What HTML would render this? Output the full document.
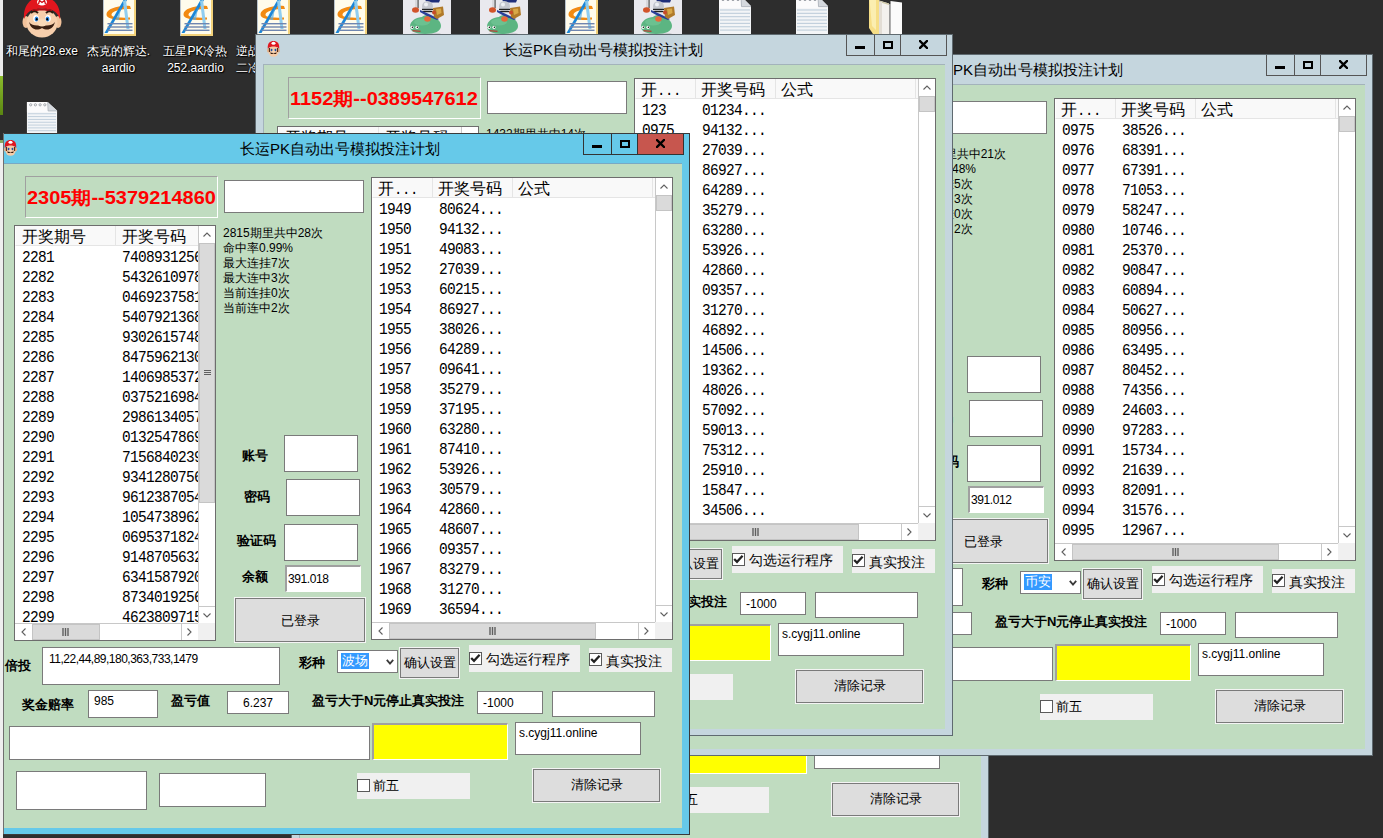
<!DOCTYPE html>
<html><head><meta charset="utf-8"><style>
html,body{margin:0;padding:0}
body{width:1383px;height:838px;overflow:hidden;position:relative;background:#2d2d2d;font-family:"Liberation Sans",sans-serif;}
div{position:absolute;box-sizing:border-box}
.win{border:1px solid #444;overflow:hidden}
.title{height:29px;line-height:30px;text-align:center;font-size:15px;color:#000;white-space:nowrap}
.mario{width:13px;height:16px;border-radius:6px 6px 5px 5px;background:radial-gradient(circle at 50% 78%,#f5c9a0 0 40%,transparent 41%),linear-gradient(#e3202a 0 45%,#6b3a20 45% 100%)}
.tb{border:1px solid #333;background:transparent}
.minbar{left:8px;top:11px;width:10px;height:3px;background:#000}
.maxbox{left:8px;top:6px;width:10px;height:8px;border:2px solid #000}
.xx{left:0;top:-1px;width:45px;text-align:center;font-weight:bold;font-size:15px;line-height:20px;font-family:"Liberation Sans",sans-serif}
.client{background:#c0dcc0;overflow:hidden}
.cedge{left:0;top:0;width:100%;height:100%;border-top:1px solid #5aa7c2;border-left:1px solid #5aa7c2}
.client>div{}
.sunk{border-top:1px solid #a0a0a0;border-left:1px solid #a0a0a0;border-bottom:1px solid #fff;border-right:1px solid #fff}
.sunkw{background:#fff;border-top:2px solid #a0a0a0;border-left:2px solid #a0a0a0;border-bottom:1px solid #fff;border-right:1px solid #fff}
.sunky{background:#ff0;border-top:2px solid #a0a0a0;border-left:2px solid #a0a0a0;border-bottom:1px solid #fff;border-right:1px solid #fff}
.red{left:1px;top:1px;height:40px;line-height:40px;color:#f00;font-weight:bold;font-size:18px;white-space:nowrap;letter-spacing:0px;transform:scaleX(1.11);transform-origin:0 50%}
.tbx{background:#fff;border:1px solid #7a7a7a}
.t{white-space:nowrap;color:#000}
.st{font-size:12px;line-height:15px}
.lb{font-size:13px;line-height:18px;font-weight:bold;margin-top:1px}
.sm{font-size:12px;line-height:14px}
.btn{background:#dddddd;border:1px solid #7a7a7a;box-shadow:0 0 0 1px #f4f4f4}
.bt{left:0;top:0;width:100%;height:100%;display:flex;align-items:center;justify-content:center;font-size:13px;padding-bottom:1px}
.lv{background:#fff;border:1px solid #6d6d6d;overflow:hidden}
.lvh{left:0;top:0;height:20px;background:#f9f9f9;border-bottom:1px solid #e5e5e5;border-left:1px solid #fff}
.hd{top:1px;font-size:16px;line-height:19px;white-space:nowrap}
.hdiv{top:0;width:1px;height:19px;background:#e5e5e5}
.rw{font-family:"Liberation Mono",monospace;font-size:14.5px;letter-spacing:-0.7px;line-height:20px;margin-top:2px;white-space:nowrap;transform:scaleY(1.08);transform-origin:50% 60%}
.dots{font-family:"Liberation Mono",monospace;font-size:14px;letter-spacing:-0.4px}
.vsb{background:#fff;border-left:1px solid #c8c8c8}
.hsb{background:#fff;border-top:1px solid #c8c8c8}
.sbtn{background:#fff}
.thumb{background:#dadada;border:1px solid #c4c4c4}
.corner{background:#f0f0f0}
.chev{width:7px;height:7px;border-left:1.5px solid #606060;border-top:1.5px solid #606060}
.chev.up{left:5px;top:6px;transform:rotate(45deg)}
.chev.dn{left:5px;top:3px;transform:rotate(225deg)}
.chev.lf{left:6px;top:5px;transform:rotate(-45deg)}
.chev.rt{left:3px;top:5px;transform:rotate(135deg)}
.grip{position:absolute;left:4px;top:50%;margin-top:-4px}
.hgrip{position:absolute;left:50%;top:3px;margin-left:-4px}
.cbbg{background:#f0f0f0}
.cb{width:13px;height:13px;border:1px solid #5a5a5a;background:#fff}
.cbl{font-size:14px;line-height:20px}
.sel{left:3px;top:2px;height:16px;padding:0 1px;background:#3399ff;color:#fff;font-size:13px;line-height:16px;white-space:nowrap}
.dtext{font-size:12px;line-height:17px;color:#fff;text-align:center;text-shadow:0 0 2px #000,1px 1px 1px #000;white-space:nowrap}

</style></head><body>
<svg width="0" height="0" style="position:absolute">
<defs>
<symbol id="aardio" viewBox="0 0 33 36">
<rect x="0" y="0" width="33" height="36" fill="#f3d27a"/>
<rect x="0.5" y="0" width="30.5" height="34" fill="#fffcec"/>
<rect x="0" y="0" width="1" height="36" fill="#b9c3cc"/>
<path d="M27 6 C15 5 4 9 3.5 14 C3 18 10 20 22 20 L27 19.5 L27 17.5 C14 18 8 17 8.5 14.5 C9 11 17 9 28 9 Z" fill="#f28a12"/>
<path d="M1.5 33 L20.5 0 L24 0 L4.5 33 Z" fill="#1b86d8"/>
<path d="M20 1 L23.5 29 L26.5 29 L23 0 Z" fill="#8fcdf0"/>
<path d="M18 7 L13 20 L16 20 Z" fill="#58aee6" opacity="0.7"/>
<rect x="4.5" y="23" width="25" height="1.4" fill="#6f86b0"/>
<rect x="4.5" y="26.3" width="25" height="1.4" fill="#6f86b0"/>
<rect x="4.5" y="29.6" width="25" height="1.4" fill="#6f86b0"/>
</symbol>
<symbol id="txtdoc" viewBox="0 0 32 34">
<path d="M0 0 H22 L32 9 V34 H0 Z" fill="#f3f5f7"/>
<path d="M0 0 H22 V10 H32 V11 H0 Z" fill="#fbfbfc"/>
<path d="M22 0 L32 9.5 H22.5 Z" fill="#d5d9de"/>
<path d="M22 0 L22.5 9.5 L32 9.5" stroke="#aab0b8" stroke-width="0.8" fill="none"/>
<g fill="none" stroke="#8b9097" stroke-width="0.8"><circle cx="4" cy="3" r="1.2"/><circle cx="9" cy="3" r="1.2"/><circle cx="14" cy="3" r="1.2"/><circle cx="19" cy="3" r="1.2"/></g>
<g fill="#bfcedb"><rect x="1" y="12" width="30" height="1"/><rect x="1" y="15" width="30" height="1"/><rect x="1" y="18" width="30" height="1"/><rect x="1" y="21" width="30" height="1"/><rect x="1" y="24" width="30" height="1"/><rect x="1" y="27" width="30" height="1"/><rect x="1" y="30" width="30" height="1"/></g>
</symbol>
<symbol id="slime" viewBox="0 0 48 34">
<rect width="48" height="34" fill="#e9e9ee"/>
<ellipse cx="23" cy="33.5" rx="15" ry="1.2" fill="#cfcfd4"/>
<path d="M7 27 C7 20 14 17.5 19 17 C21 14.5 26 14.5 28 17 C34 18 38 21 38 26 C38 31 32 34 22 34 C12 34 7 31 7 27 Z" fill="#5cb582"/>
<ellipse cx="19" cy="22" rx="8" ry="3.5" fill="#6fc493" opacity="0.8"/>
<circle cx="9" cy="27.3" r="1.6" fill="#fff"/><circle cx="14" cy="27.3" r="1.6" fill="#fff"/>
<circle cx="9.4" cy="27.3" r="0.8" fill="#111"/><circle cx="14.4" cy="27.3" r="0.8" fill="#111"/>
<path d="M9.5 30.8 L17.5 31.3" stroke="#c22" stroke-width="1.1"/>
<path d="M22 0 L37 0 L36 2.5 L25 2.5 Z" fill="#1f2f7a"/>
<rect x="12" y="0" width="3" height="8" fill="#d8d8dc"/><rect x="14.5" y="0" width="1.2" height="8" fill="#555"/>
<circle cx="24.5" cy="6.5" r="5.5" fill="#c4c7cf"/>
<circle cx="23" cy="4.5" r="2" fill="#eef0f4"/>
<rect x="19" y="8.8" width="11" height="1.3" fill="#222"/><rect x="19.5" y="11" width="10" height="1.2" fill="#222"/>
<path d="M17 10 L26 14 L36 19 L34 20 L24 16 L17 12 Z" fill="#2a3f9a"/>
<path d="M30 8 L40 6.5 L41 15 L34 19 L31 17 Z" fill="#b07a2a"/>
<path d="M33 9 L38 8.5 L38.5 13 L34 15 Z" fill="#d8a848"/>
<ellipse cx="12.5" cy="10" rx="3.5" ry="2.8" fill="#d2542a"/>
<ellipse cx="24.5" cy="19" rx="3.3" ry="2.8" fill="#e7683a"/>
<ellipse cx="31" cy="12.5" rx="2" ry="2" fill="#c84a2a"/>
</symbol>
<symbol id="folder" viewBox="0 0 34 34">
<path d="M0 0 H10 V34 H4 L0 28 Z" fill="#f6de86"/>
<path d="M0.5 0 H7 V30 L3 26 Z" fill="#fbeeb0"/>
<path d="M10 0.5 L20 3.5 L20 34 L10 34 Z" fill="#f3f1ee"/>
<path d="M10 0.5 L20 3.5 L20 5 L10 2 Z" fill="#cfc9a8"/>
<rect x="10" y="2" width="3" height="32" fill="#e2ddd5"/>
<rect x="20" y="4" width="1.5" height="30" fill="#9a9a9a"/>
<path d="M21.5 1 L33 2.5 L33 34 L21.5 34 Z" fill="#fbfbfb"/>
</symbol>
<symbol id="mario" viewBox="0 0 40 38">
<ellipse cx="4" cy="22" rx="3.5" ry="6" fill="#f2c29b"/>
<ellipse cx="36" cy="22" rx="3.5" ry="6" fill="#f2c29b"/>
<ellipse cx="20" cy="23" rx="15.5" ry="14.5" fill="#f7cfac"/>
<path d="M2 19 C1 6 8 -3 20 -3 C32 -3 39 6 38 19 C36 14 33 11 30 10 C24 8 16 8 10 10 C7 11 4 14 2 19 Z" fill="#e1161e"/>
<path d="M10 10 C16 8 24 8 30 10 L30 12 C24 10 16 10 10 12 Z" fill="#b01017"/>
<ellipse cx="20" cy="2" rx="5" ry="3.5" fill="#fff"/>
<path d="M16.5 4 L17.5 0.5 L20 2.5 L22.5 0.5 L23.5 4" stroke="#d01018" stroke-width="1.3" fill="none"/>
<path d="M9 13 C11 11 14 11 16 13" stroke="#2a1a10" stroke-width="2" fill="none"/>
<path d="M24 13 C26 11 29 11 31 13" stroke="#2a1a10" stroke-width="2" fill="none"/>
<ellipse cx="14" cy="18.5" rx="2.8" ry="3.5" fill="#fff"/><ellipse cx="26" cy="18.5" rx="2.8" ry="3.5" fill="#fff"/>
<ellipse cx="14.5" cy="19" rx="1.9" ry="2.6" fill="#2a86e0"/><ellipse cx="25.5" cy="19" rx="1.9" ry="2.6" fill="#2a86e0"/>
<ellipse cx="14.8" cy="19.3" rx="0.9" ry="1.3" fill="#000"/><ellipse cx="25.2" cy="19.3" rx="0.9" ry="1.3" fill="#000"/>
<path d="M7 22 C9 30 15 31 20 28 C25 31 31 30 33 22 C30 26 25 26 20 25 C15 26 10 26 7 22 Z" fill="#3a1f12"/>
<ellipse cx="20" cy="22.5" rx="5" ry="4" fill="#f9d8b8"/>
</symbol>
<symbol id="mario16" viewBox="0 0 13 16">
<ellipse cx="1.3" cy="9.5" rx="1.3" ry="2" fill="#e8b48c"/>
<ellipse cx="11.7" cy="9.5" rx="1.3" ry="2" fill="#e8b48c"/>
<ellipse cx="6.5" cy="10.3" rx="5.2" ry="5.5" fill="#f6cba6"/>
<path d="M0.8 7.8 C0.3 2 3 0 6.5 0 C10 0 12.7 2 12.2 7.8 C10.5 6 8.5 5.6 6.5 5.6 C4.5 5.6 2.5 6 0.8 7.8 Z" fill="#e0171f"/>
<ellipse cx="6.5" cy="2.3" rx="2" ry="1.5" fill="#fff"/>
<rect x="1.8" y="7" width="1.3" height="4" fill="#5a2e16"/><rect x="9.9" y="7" width="1.3" height="4" fill="#5a2e16"/>
<ellipse cx="4.6" cy="9" rx="0.9" ry="1.2" fill="#1c4fa8"/><ellipse cx="8.4" cy="9" rx="0.9" ry="1.2" fill="#1c4fa8"/>
<path d="M2.8 11.2 C4 13.8 5.8 13 6.5 12.3 C7.2 13 9 13.8 10.2 11.2 C9 12 7.5 11.8 6.5 11.2 C5.5 11.8 4 12 2.8 11.2 Z" fill="#2e180c"/>
<ellipse cx="6.5" cy="10.8" rx="1.6" ry="1.2" fill="#f9d6b6"/>
</symbol>
</defs></svg>
<svg style="position:absolute;left:22px;top:0" width="40" height="38"><use href="#mario"/></svg>
<svg style="position:absolute;left:103px;top:0" width="33" height="36"><use href="#aardio"/></svg>
<svg style="position:absolute;left:180px;top:0" width="33" height="36"><use href="#aardio"/></svg>
<svg style="position:absolute;left:257px;top:0" width="33" height="36"><use href="#aardio"/></svg>
<svg style="position:absolute;left:334px;top:0" width="33" height="36"><use href="#aardio"/></svg>
<svg style="position:absolute;left:565px;top:0" width="33" height="36"><use href="#aardio"/></svg>
<svg style="position:absolute;left:403px;top:0" width="48" height="34"><use href="#slime"/></svg>
<svg style="position:absolute;left:480px;top:0" width="48" height="34"><use href="#slime"/></svg>
<svg style="position:absolute;left:634px;top:0" width="48" height="34"><use href="#slime"/></svg>
<svg style="position:absolute;left:719px;top:-4px" width="32" height="38" viewBox="0 0 32 34" preserveAspectRatio="none"><use href="#txtdoc"/></svg>
<svg style="position:absolute;left:796px;top:-4px" width="32" height="38" viewBox="0 0 32 34" preserveAspectRatio="none"><use href="#txtdoc"/></svg>
<svg style="position:absolute;left:869px;top:0" width="34" height="34"><use href="#folder"/></svg>
<svg style="position:absolute;left:26px;top:102px" width="32" height="32"><use href="#txtdoc"/></svg>
<div class="dtext" style="left:-1px;top:43px;width:86px">和尾的28.exe</div>
<div class="dtext" style="left:80px;top:43px;width:77px">杰克的辉达.<br>aardio</div>
<div class="dtext" style="left:157px;top:43px;width:77px">五星PK冷热<br>252.aardio</div>
<div class="dtext" style="left:236px;top:43px;width:77px;text-align:left">逆战<br>二冷</div>

<div class="win" style="left:291px;top:147px;width:698px;height:702px;background:#c5d6de;border-color:#5f6a70"><svg style="position:absolute;left:11px;top:6px" width="13" height="16"><use href="#mario16"/></svg><div class="title" style="left:47px;top:0;width:600px">长运PK自动出号模拟投注计划</div><div class="tb" style="left:590px;top:-1px;width:29px;height:22px;border-color:#555"><div class="minbar"></div></div><div class="tb" style="left:618px;top:-1px;width:27px;height:22px;border-color:#555"><div class="maxbox"></div></div><div class="tb" style="left:644px;top:-1px;width:47px;height:22px;border-color:#555;background:#c5d6de"><svg style="position:absolute;left:18px;top:5px" width="9" height="9" viewBox="0 0 9 9"><path d="M1 1 L8 8 M8 1 L1 8" stroke="#000" stroke-width="2.4" stroke-linecap="square"/></svg></div><div class="client" style="left:7px;top:29px;width:682px;height:665px;"><div class="cedge" style="border-color:#a3b3bb"></div><div class="sunk" style="left:25px;top:13px;width:193px;height:42px;"><div class="red">1152期--0389547612</div></div><div class="tbx" style="left:224px;top:17px;width:140px;height:33px;"></div><div class="lv" style="left:14px;top:62px;width:202px;height:416px"><div class="lvh" style="width:183px"></div><div class="hd" style="left:7px">开奖期号</div><div class="hdiv" style="left:100px"></div><div class="hd" style="left:107px">开奖号码</div><div class="rw" style="left:7px;top:20px">1130</div><div class="rw" style="left:107px;top:20px">0389547612</div><div class="rw" style="left:7px;top:40px">1131</div><div class="rw" style="left:107px;top:40px">0389547612</div><div class="rw" style="left:7px;top:60px">1132</div><div class="rw" style="left:107px;top:60px">0389547612</div><div class="rw" style="left:7px;top:80px">1133</div><div class="rw" style="left:107px;top:80px">0389547612</div><div class="rw" style="left:7px;top:100px">1134</div><div class="rw" style="left:107px;top:100px">0389547612</div><div class="rw" style="left:7px;top:120px">1135</div><div class="rw" style="left:107px;top:120px">0389547612</div><div class="rw" style="left:7px;top:140px">1136</div><div class="rw" style="left:107px;top:140px">0389547612</div><div class="rw" style="left:7px;top:160px">1137</div><div class="rw" style="left:107px;top:160px">0389547612</div><div class="rw" style="left:7px;top:180px">1138</div><div class="rw" style="left:107px;top:180px">0389547612</div><div class="rw" style="left:7px;top:200px">1139</div><div class="rw" style="left:107px;top:200px">0389547612</div><div class="rw" style="left:7px;top:220px">1140</div><div class="rw" style="left:107px;top:220px">0389547612</div><div class="rw" style="left:7px;top:240px">1141</div><div class="rw" style="left:107px;top:240px">0389547612</div><div class="rw" style="left:7px;top:260px">1142</div><div class="rw" style="left:107px;top:260px">0389547612</div><div class="rw" style="left:7px;top:280px">1143</div><div class="rw" style="left:107px;top:280px">0389547612</div><div class="rw" style="left:7px;top:300px">1144</div><div class="rw" style="left:107px;top:300px">0389547612</div><div class="rw" style="left:7px;top:320px">1145</div><div class="rw" style="left:107px;top:320px">0389547612</div><div class="rw" style="left:7px;top:340px">1146</div><div class="rw" style="left:107px;top:340px">0389547612</div><div class="rw" style="left:7px;top:360px">1147</div><div class="rw" style="left:107px;top:360px">0389547612</div><div class="rw" style="left:7px;top:380px">1148</div><div class="rw" style="left:107px;top:380px">0389547612</div><div class="vsb" style="left:183px;top:0;width:17px;height:397px"><div class="sbtn" style="left:0;top:0;width:16px;height:17px"><svg style="position:absolute;left:4px;top:6px" width="8" height="5" viewBox="0 0 8 5"><path d="M0.5 4.5 L4 1 L7.5 4.5" stroke="#606060" stroke-width="1.1" fill="none"/></svg></div><div class="thumb" style="left:0;top:17px;width:16px;height:260px"><svg class="grip" width="7" height="7" viewBox="0 0 7 7"><path d="M0 1.5H7M0 3.5H7M0 5.5H7" stroke="#606060" stroke-width="1"/></svg></div><div class="sbtn" style="left:0;top:380px;width:16px;height:17px;border-top:1px solid #c8c8c8"><svg style="position:absolute;left:4px;top:6px" width="8" height="5" viewBox="0 0 8 5"><path d="M0.5 0.5 L4 4 L7.5 0.5" stroke="#606060" stroke-width="1.1" fill="none"/></svg></div></div><div class="hsb" style="left:0;top:397px;width:183px;height:17px"><div class="sbtn" style="left:0;top:0;width:17px;height:16px"><svg style="position:absolute;left:6px;top:4px" width="5" height="8" viewBox="0 0 5 8"><path d="M4.5 0.5 L1 4 L4.5 7.5" stroke="#606060" stroke-width="1.1" fill="none"/></svg></div><div class="thumb" style="left:17px;top:0;width:68px;height:16px"><svg class="hgrip" width="7" height="8" viewBox="0 0 7 8"><path d="M1 0V8M3.5 0V8M6 0V8" stroke="#606060" stroke-width="1.4"/></svg></div><div class="sbtn" style="left:166px;top:0;width:17px;height:16px;border-left:1px solid #c8c8c8"><svg style="position:absolute;left:5px;top:4px" width="5" height="8" viewBox="0 0 5 8"><path d="M0.5 0.5 L4 4 L0.5 7.5" stroke="#606060" stroke-width="1.1" fill="none"/></svg></div></div><div class="corner" style="left:183px;top:397px;width:17px;height:17px"></div></div><div class="t st" style="left:223px;top:63px;">1432期里共中14次</div><div class="t st" style="left:223px;top:78px;">命中率0.98%</div><div class="t st" style="left:223px;top:93px;">最大连挂7次</div><div class="t st" style="left:223px;top:108px;">最大连中3次</div><div class="t st" style="left:223px;top:123px;">当前连挂0次</div><div class="t st" style="left:223px;top:138px;">当前连中2次</div><div class="lv" style="left:371px;top:14px;width:302px;height:463px"><div class="lvh" style="width:283px"></div><div class="hd" style="left:6px">开<span class=dots>...</span></div><div class="hdiv" style="left:60px"></div><div class="hd" style="left:66px">开奖号码</div><div class="hdiv" style="left:140px"></div><div class="hd" style="left:146px">公式</div><div class="hdiv" style="left:280px"></div><div class="rw" style="left:7px;top:20px">123</div><div class="rw" style="left:67px;top:20px">01234...</div><div class="rw" style="left:7px;top:40px">0975</div><div class="rw" style="left:67px;top:40px">94132...</div><div class="rw" style="left:7px;top:60px">0976</div><div class="rw" style="left:67px;top:60px">27039...</div><div class="rw" style="left:7px;top:80px">0977</div><div class="rw" style="left:67px;top:80px">86927...</div><div class="rw" style="left:7px;top:100px">0978</div><div class="rw" style="left:67px;top:100px">64289...</div><div class="rw" style="left:7px;top:120px">0979</div><div class="rw" style="left:67px;top:120px">35279...</div><div class="rw" style="left:7px;top:140px">0980</div><div class="rw" style="left:67px;top:140px">63280...</div><div class="rw" style="left:7px;top:160px">0981</div><div class="rw" style="left:67px;top:160px">53926...</div><div class="rw" style="left:7px;top:180px">0982</div><div class="rw" style="left:67px;top:180px">42860...</div><div class="rw" style="left:7px;top:200px">0983</div><div class="rw" style="left:67px;top:200px">09357...</div><div class="rw" style="left:7px;top:220px">0984</div><div class="rw" style="left:67px;top:220px">31270...</div><div class="rw" style="left:7px;top:240px">0985</div><div class="rw" style="left:67px;top:240px">46892...</div><div class="rw" style="left:7px;top:260px">0986</div><div class="rw" style="left:67px;top:260px">14506...</div><div class="rw" style="left:7px;top:280px">0987</div><div class="rw" style="left:67px;top:280px">19362...</div><div class="rw" style="left:7px;top:300px">0988</div><div class="rw" style="left:67px;top:300px">48026...</div><div class="rw" style="left:7px;top:320px">0989</div><div class="rw" style="left:67px;top:320px">57092...</div><div class="rw" style="left:7px;top:340px">0990</div><div class="rw" style="left:67px;top:340px">59013...</div><div class="rw" style="left:7px;top:360px">0991</div><div class="rw" style="left:67px;top:360px">75312...</div><div class="rw" style="left:7px;top:380px">0992</div><div class="rw" style="left:67px;top:380px">25910...</div><div class="rw" style="left:7px;top:400px">0993</div><div class="rw" style="left:67px;top:400px">15847...</div><div class="rw" style="left:7px;top:420px">0994</div><div class="rw" style="left:67px;top:420px">34506...</div><div class="vsb" style="left:283px;top:0;width:17px;height:444px"><div class="sbtn" style="left:0;top:0;width:16px;height:17px"><svg style="position:absolute;left:4px;top:6px" width="8" height="5" viewBox="0 0 8 5"><path d="M0.5 4.5 L4 1 L7.5 4.5" stroke="#606060" stroke-width="1.1" fill="none"/></svg></div><div class="thumb" style="left:0;top:17px;width:16px;height:16px"></div><div class="sbtn" style="left:0;top:427px;width:16px;height:17px;border-top:1px solid #c8c8c8"><svg style="position:absolute;left:4px;top:6px" width="8" height="5" viewBox="0 0 8 5"><path d="M0.5 0.5 L4 4 L7.5 0.5" stroke="#606060" stroke-width="1.1" fill="none"/></svg></div></div><div class="hsb" style="left:0;top:444px;width:283px;height:17px"><div class="sbtn" style="left:0;top:0;width:17px;height:16px"><svg style="position:absolute;left:6px;top:4px" width="5" height="8" viewBox="0 0 5 8"><path d="M4.5 0.5 L1 4 L4.5 7.5" stroke="#606060" stroke-width="1.1" fill="none"/></svg></div><div class="thumb" style="left:17px;top:0;width:207px;height:16px"><svg class="hgrip" width="7" height="8" viewBox="0 0 7 8"><path d="M1 0V8M3.5 0V8M6 0V8" stroke="#606060" stroke-width="1.4"/></svg></div><div class="sbtn" style="left:266px;top:0;width:17px;height:16px;border-left:1px solid #c8c8c8"><svg style="position:absolute;left:5px;top:4px" width="5" height="8" viewBox="0 0 5 8"><path d="M0.5 0.5 L4 4 L0.5 7.5" stroke="#606060" stroke-width="1.1" fill="none"/></svg></div></div><div class="corner" style="left:283px;top:444px;width:17px;height:17px"></div></div><div class="t lb" style="left:242px;top:283px;">账号</div><div class="tbx" style="left:284px;top:272px;width:74px;height:37px;"></div><div class="t lb" style="left:244px;top:324px;">密码</div><div class="tbx" style="left:286px;top:316px;width:74px;height:37px;"></div><div class="t lb" style="left:237px;top:368px;">验证码</div><div class="tbx" style="left:284px;top:361px;width:74px;height:37px;"></div><div class="t lb" style="left:242px;top:404px;">余额</div><div class="sunkw" style="left:285px;top:402px;width:76px;height:27px;"><div class="t sm" style="left:1px;top:5px;letter-spacing:-0.4px">391.018</div></div><div class="btn" style="left:235px;top:435px;width:130px;height:44px;"><div class="bt" style="padding:1px 0 0 0">已登录</div></div><div class="t lb" style="left:5px;top:493px;">倍投</div><div class="tbx" style="left:42px;top:484px;width:238px;height:38px;"><div class="t sm" style="left:6px;top:4px;letter-spacing:-0.5px">11,22,44,89,180,363,733,1479</div></div><div class="t lb" style="left:299px;top:490px;">彩种</div><div class="tbx" style="left:337px;top:487px;width:61px;height:23px;"><div class="sel">波场</div><svg style="position:absolute;left:48px;top:8px" width="8" height="6" viewBox="0 0 8 6"><path d="M0.8 0.8 L4 4.5 L7.2 0.8" stroke="#3a3a3a" stroke-width="1.8" fill="none"/></svg></div><div class="btn" style="left:400px;top:485px;width:59px;height:30px;"><div class="bt">确认设置</div></div><div class="cbbg" style="left:469px;top:482px;width:111px;height:27px"><div class="cb" style="left:0px;top:7px"><svg width="11" height="11" viewBox="0 0 11 11" style="position:absolute;left:0;top:0"><path d="M1.2 5 L4 7.8 L9.6 1.8" stroke="#222" stroke-width="2.3" fill="none"/></svg></div><div class="t cbl" style="left:17px;top:4px;font-size:14px">勾选运行程序</div></div><div class="cbbg" style="left:589px;top:485px;width:83px;height:24px"><div class="cb" style="left:0px;top:5px"><svg width="11" height="11" viewBox="0 0 11 11" style="position:absolute;left:0;top:0"><path d="M1.2 5 L4 7.8 L9.6 1.8" stroke="#222" stroke-width="2.3" fill="none"/></svg></div><div class="t cbl" style="left:17px;top:3px;font-size:14px">真实投注</div></div><div class="t lb" style="left:22px;top:532px;">奖金赔率</div><div class="tbx" style="left:88px;top:527px;width:70px;height:28px;"><div class="t sm" style="left:5px;top:3px">985</div></div><div class="t lb" style="left:171px;top:528px;">盈亏值</div><div class="tbx" style="left:227px;top:528px;width:62px;height:23px;"><div class="t sm" style="left:0;width:60px;text-align:center;top:4px">6.237</div></div><div class="t lb" style="left:312px;top:528px;">盈亏大于N元停止真实投注</div><div class="tbx" style="left:477px;top:528px;width:66px;height:23px;"><div class="t sm" style="left:5px;top:4px">-1000</div></div><div class="tbx" style="left:552px;top:528px;width:103px;height:26px;"></div><div class="tbx" style="left:9px;top:563px;width:361px;height:34px;"></div><div class="sunky" style="left:372px;top:560px;width:136px;height:37px;"></div><div class="tbx" style="left:515px;top:559px;width:126px;height:33px;"><div class="t sm" style="left:3px;top:3px">s.cygj11.online</div></div><div class="tbx" style="left:16px;top:608px;width:131px;height:39px;"></div><div class="tbx" style="left:159px;top:610px;width:107px;height:34px;"></div><div class="cbbg" style="left:357px;top:610px;width:113px;height:26px"><div class="cb" style="left:0px;top:6px"></div><div class="t cbl" style="left:16px;top:3px;font-size:13px">前五</div></div><div class="btn" style="left:533px;top:606px;width:127px;height:33px;"><div class="bt">清除记录</div></div></div></div>
<div class="win" style="left:675px;top:54px;width:698px;height:702px;background:#c5d6de;border-color:#5f6a70"><svg style="position:absolute;left:11px;top:6px" width="13" height="16"><use href="#mario16"/></svg><div class="title" style="left:47px;top:0;width:600px">长运PK自动出号模拟投注计划</div><div class="tb" style="left:590px;top:-1px;width:29px;height:22px;border-color:#555"><div class="minbar"></div></div><div class="tb" style="left:618px;top:-1px;width:27px;height:22px;border-color:#555"><div class="maxbox"></div></div><div class="tb" style="left:644px;top:-1px;width:47px;height:22px;border-color:#555;background:#c5d6de"><svg style="position:absolute;left:18px;top:5px" width="9" height="9" viewBox="0 0 9 9"><path d="M1 1 L8 8 M8 1 L1 8" stroke="#000" stroke-width="2.4" stroke-linecap="square"/></svg></div><div class="client" style="left:7px;top:29px;width:682px;height:665px;"><div class="cedge" style="border-color:#a3b3bb"></div><div class="sunk" style="left:25px;top:13px;width:193px;height:42px;"><div class="red">0995期--1296738540</div></div><div class="tbx" style="left:224px;top:17px;width:140px;height:33px;"></div><div class="lv" style="left:14px;top:62px;width:202px;height:416px"><div class="lvh" style="width:183px"></div><div class="hd" style="left:7px">开奖期号</div><div class="hdiv" style="left:100px"></div><div class="hd" style="left:107px">开奖号码</div><div class="rw" style="left:7px;top:20px">0975</div><div class="rw" style="left:107px;top:20px">3852619470</div><div class="rw" style="left:7px;top:40px">0976</div><div class="rw" style="left:107px;top:40px">3852619470</div><div class="rw" style="left:7px;top:60px">0977</div><div class="rw" style="left:107px;top:60px">3852619470</div><div class="rw" style="left:7px;top:80px">0978</div><div class="rw" style="left:107px;top:80px">3852619470</div><div class="rw" style="left:7px;top:100px">0979</div><div class="rw" style="left:107px;top:100px">3852619470</div><div class="rw" style="left:7px;top:120px">0980</div><div class="rw" style="left:107px;top:120px">3852619470</div><div class="rw" style="left:7px;top:140px">0981</div><div class="rw" style="left:107px;top:140px">3852619470</div><div class="rw" style="left:7px;top:160px">0982</div><div class="rw" style="left:107px;top:160px">3852619470</div><div class="rw" style="left:7px;top:180px">0983</div><div class="rw" style="left:107px;top:180px">3852619470</div><div class="rw" style="left:7px;top:200px">0984</div><div class="rw" style="left:107px;top:200px">3852619470</div><div class="rw" style="left:7px;top:220px">0985</div><div class="rw" style="left:107px;top:220px">3852619470</div><div class="rw" style="left:7px;top:240px">0986</div><div class="rw" style="left:107px;top:240px">3852619470</div><div class="rw" style="left:7px;top:260px">0987</div><div class="rw" style="left:107px;top:260px">3852619470</div><div class="rw" style="left:7px;top:280px">0988</div><div class="rw" style="left:107px;top:280px">3852619470</div><div class="rw" style="left:7px;top:300px">0989</div><div class="rw" style="left:107px;top:300px">3852619470</div><div class="rw" style="left:7px;top:320px">0990</div><div class="rw" style="left:107px;top:320px">3852619470</div><div class="rw" style="left:7px;top:340px">0991</div><div class="rw" style="left:107px;top:340px">3852619470</div><div class="rw" style="left:7px;top:360px">0992</div><div class="rw" style="left:107px;top:360px">3852619470</div><div class="rw" style="left:7px;top:380px">0993</div><div class="rw" style="left:107px;top:380px">3852619470</div><div class="vsb" style="left:183px;top:0;width:17px;height:397px"><div class="sbtn" style="left:0;top:0;width:16px;height:17px"><svg style="position:absolute;left:4px;top:6px" width="8" height="5" viewBox="0 0 8 5"><path d="M0.5 4.5 L4 1 L7.5 4.5" stroke="#606060" stroke-width="1.1" fill="none"/></svg></div><div class="thumb" style="left:0;top:17px;width:16px;height:260px"><svg class="grip" width="7" height="7" viewBox="0 0 7 7"><path d="M0 1.5H7M0 3.5H7M0 5.5H7" stroke="#606060" stroke-width="1"/></svg></div><div class="sbtn" style="left:0;top:380px;width:16px;height:17px;border-top:1px solid #c8c8c8"><svg style="position:absolute;left:4px;top:6px" width="8" height="5" viewBox="0 0 8 5"><path d="M0.5 0.5 L4 4 L7.5 0.5" stroke="#606060" stroke-width="1.1" fill="none"/></svg></div></div><div class="hsb" style="left:0;top:397px;width:183px;height:17px"><div class="sbtn" style="left:0;top:0;width:17px;height:16px"><svg style="position:absolute;left:6px;top:4px" width="5" height="8" viewBox="0 0 5 8"><path d="M4.5 0.5 L1 4 L4.5 7.5" stroke="#606060" stroke-width="1.1" fill="none"/></svg></div><div class="thumb" style="left:17px;top:0;width:68px;height:16px"><svg class="hgrip" width="7" height="8" viewBox="0 0 7 8"><path d="M1 0V8M3.5 0V8M6 0V8" stroke="#606060" stroke-width="1.4"/></svg></div><div class="sbtn" style="left:166px;top:0;width:17px;height:16px;border-left:1px solid #c8c8c8"><svg style="position:absolute;left:5px;top:4px" width="5" height="8" viewBox="0 0 5 8"><path d="M0.5 0.5 L4 4 L0.5 7.5" stroke="#606060" stroke-width="1.1" fill="none"/></svg></div></div><div class="corner" style="left:183px;top:397px;width:17px;height:17px"></div></div><div class="t st" style="left:223px;top:63px;">1432期里共中21次</div><div class="t st" style="left:223px;top:78px;">命中率1.48%</div><div class="t st" style="left:223px;top:93px;">最大连挂5次</div><div class="t st" style="left:223px;top:108px;">最大连中3次</div><div class="t st" style="left:223px;top:123px;">当前连挂0次</div><div class="t st" style="left:223px;top:138px;">当前连中2次</div><div class="lv" style="left:371px;top:14px;width:302px;height:463px"><div class="lvh" style="width:283px"></div><div class="hd" style="left:6px">开<span class=dots>...</span></div><div class="hdiv" style="left:60px"></div><div class="hd" style="left:66px">开奖号码</div><div class="hdiv" style="left:140px"></div><div class="hd" style="left:146px">公式</div><div class="hdiv" style="left:280px"></div><div class="rw" style="left:7px;top:20px">0975</div><div class="rw" style="left:67px;top:20px">38526...</div><div class="rw" style="left:7px;top:40px">0976</div><div class="rw" style="left:67px;top:40px">68391...</div><div class="rw" style="left:7px;top:60px">0977</div><div class="rw" style="left:67px;top:60px">67391...</div><div class="rw" style="left:7px;top:80px">0978</div><div class="rw" style="left:67px;top:80px">71053...</div><div class="rw" style="left:7px;top:100px">0979</div><div class="rw" style="left:67px;top:100px">58247...</div><div class="rw" style="left:7px;top:120px">0980</div><div class="rw" style="left:67px;top:120px">10746...</div><div class="rw" style="left:7px;top:140px">0981</div><div class="rw" style="left:67px;top:140px">25370...</div><div class="rw" style="left:7px;top:160px">0982</div><div class="rw" style="left:67px;top:160px">90847...</div><div class="rw" style="left:7px;top:180px">0983</div><div class="rw" style="left:67px;top:180px">60894...</div><div class="rw" style="left:7px;top:200px">0984</div><div class="rw" style="left:67px;top:200px">50627...</div><div class="rw" style="left:7px;top:220px">0985</div><div class="rw" style="left:67px;top:220px">80956...</div><div class="rw" style="left:7px;top:240px">0986</div><div class="rw" style="left:67px;top:240px">63495...</div><div class="rw" style="left:7px;top:260px">0987</div><div class="rw" style="left:67px;top:260px">80452...</div><div class="rw" style="left:7px;top:280px">0988</div><div class="rw" style="left:67px;top:280px">74356...</div><div class="rw" style="left:7px;top:300px">0989</div><div class="rw" style="left:67px;top:300px">24603...</div><div class="rw" style="left:7px;top:320px">0990</div><div class="rw" style="left:67px;top:320px">97283...</div><div class="rw" style="left:7px;top:340px">0991</div><div class="rw" style="left:67px;top:340px">15734...</div><div class="rw" style="left:7px;top:360px">0992</div><div class="rw" style="left:67px;top:360px">21639...</div><div class="rw" style="left:7px;top:380px">0993</div><div class="rw" style="left:67px;top:380px">82091...</div><div class="rw" style="left:7px;top:400px">0994</div><div class="rw" style="left:67px;top:400px">31576...</div><div class="rw" style="left:7px;top:420px">0995</div><div class="rw" style="left:67px;top:420px">12967...</div><div class="vsb" style="left:283px;top:0;width:17px;height:444px"><div class="sbtn" style="left:0;top:0;width:16px;height:17px"><svg style="position:absolute;left:4px;top:6px" width="8" height="5" viewBox="0 0 8 5"><path d="M0.5 4.5 L4 1 L7.5 4.5" stroke="#606060" stroke-width="1.1" fill="none"/></svg></div><div class="thumb" style="left:0;top:17px;width:16px;height:16px"></div><div class="sbtn" style="left:0;top:427px;width:16px;height:17px;border-top:1px solid #c8c8c8"><svg style="position:absolute;left:4px;top:6px" width="8" height="5" viewBox="0 0 8 5"><path d="M0.5 0.5 L4 4 L7.5 0.5" stroke="#606060" stroke-width="1.1" fill="none"/></svg></div></div><div class="hsb" style="left:0;top:444px;width:283px;height:17px"><div class="sbtn" style="left:0;top:0;width:17px;height:16px"><svg style="position:absolute;left:6px;top:4px" width="5" height="8" viewBox="0 0 5 8"><path d="M4.5 0.5 L1 4 L4.5 7.5" stroke="#606060" stroke-width="1.1" fill="none"/></svg></div><div class="thumb" style="left:17px;top:0;width:207px;height:16px"><svg class="hgrip" width="7" height="8" viewBox="0 0 7 8"><path d="M1 0V8M3.5 0V8M6 0V8" stroke="#606060" stroke-width="1.4"/></svg></div><div class="sbtn" style="left:266px;top:0;width:17px;height:16px;border-left:1px solid #c8c8c8"><svg style="position:absolute;left:5px;top:4px" width="5" height="8" viewBox="0 0 5 8"><path d="M0.5 0.5 L4 4 L0.5 7.5" stroke="#606060" stroke-width="1.1" fill="none"/></svg></div></div><div class="corner" style="left:283px;top:444px;width:17px;height:17px"></div></div><div class="t lb" style="left:242px;top:283px;">账号</div><div class="tbx" style="left:284px;top:272px;width:74px;height:37px;"></div><div class="t lb" style="left:244px;top:324px;">密码</div><div class="tbx" style="left:286px;top:316px;width:74px;height:37px;"></div><div class="t lb" style="left:237px;top:368px;">验证码</div><div class="tbx" style="left:284px;top:361px;width:74px;height:37px;"></div><div class="t lb" style="left:242px;top:404px;">余额</div><div class="sunkw" style="left:285px;top:402px;width:76px;height:27px;"><div class="t sm" style="left:1px;top:5px;letter-spacing:-0.4px">391.012</div></div><div class="btn" style="left:235px;top:435px;width:130px;height:44px;"><div class="bt" style="padding:1px 0 0 0">已登录</div></div><div class="t lb" style="left:5px;top:493px;">倍投</div><div class="tbx" style="left:42px;top:484px;width:238px;height:38px;"><div class="t sm" style="left:6px;top:4px;letter-spacing:-0.5px">11,22,44,89,180,363,733,1479</div></div><div class="t lb" style="left:299px;top:490px;">彩种</div><div class="tbx" style="left:337px;top:487px;width:61px;height:23px;"><div class="sel">币安</div><svg style="position:absolute;left:48px;top:8px" width="8" height="6" viewBox="0 0 8 6"><path d="M0.8 0.8 L4 4.5 L7.2 0.8" stroke="#3a3a3a" stroke-width="1.8" fill="none"/></svg></div><div class="btn" style="left:400px;top:485px;width:59px;height:30px;"><div class="bt">确认设置</div></div><div class="cbbg" style="left:469px;top:482px;width:111px;height:27px"><div class="cb" style="left:0px;top:7px"><svg width="11" height="11" viewBox="0 0 11 11" style="position:absolute;left:0;top:0"><path d="M1.2 5 L4 7.8 L9.6 1.8" stroke="#222" stroke-width="2.3" fill="none"/></svg></div><div class="t cbl" style="left:17px;top:4px;font-size:14px">勾选运行程序</div></div><div class="cbbg" style="left:589px;top:485px;width:83px;height:24px"><div class="cb" style="left:0px;top:5px"><svg width="11" height="11" viewBox="0 0 11 11" style="position:absolute;left:0;top:0"><path d="M1.2 5 L4 7.8 L9.6 1.8" stroke="#222" stroke-width="2.3" fill="none"/></svg></div><div class="t cbl" style="left:17px;top:3px;font-size:14px">真实投注</div></div><div class="t lb" style="left:22px;top:532px;">奖金赔率</div><div class="tbx" style="left:88px;top:527px;width:70px;height:28px;"><div class="t sm" style="left:5px;top:3px">985</div></div><div class="t lb" style="left:171px;top:528px;">盈亏值</div><div class="tbx" style="left:227px;top:528px;width:62px;height:23px;"><div class="t sm" style="left:0;width:60px;text-align:center;top:4px"></div></div><div class="t lb" style="left:312px;top:528px;">盈亏大于N元停止真实投注</div><div class="tbx" style="left:477px;top:528px;width:66px;height:23px;"><div class="t sm" style="left:5px;top:4px">-1000</div></div><div class="tbx" style="left:552px;top:528px;width:103px;height:26px;"></div><div class="tbx" style="left:9px;top:563px;width:361px;height:34px;"></div><div class="sunky" style="left:372px;top:560px;width:136px;height:37px;"></div><div class="tbx" style="left:515px;top:559px;width:126px;height:33px;"><div class="t sm" style="left:3px;top:3px">s.cygj11.online</div></div><div class="tbx" style="left:16px;top:608px;width:131px;height:39px;"></div><div class="tbx" style="left:159px;top:610px;width:107px;height:34px;"></div><div class="cbbg" style="left:357px;top:610px;width:113px;height:26px"><div class="cb" style="left:0px;top:6px"></div><div class="t cbl" style="left:16px;top:3px;font-size:13px">前五</div></div><div class="btn" style="left:533px;top:606px;width:127px;height:33px;"><div class="bt">清除记录</div></div></div></div>
<div class="win" style="left:255px;top:34px;width:698px;height:702px;background:#c5d6de;border-color:#5f6a70"><svg style="position:absolute;left:11px;top:6px" width="13" height="16"><use href="#mario16"/></svg><div class="title" style="left:47px;top:0;width:600px">长运PK自动出号模拟投注计划</div><div class="tb" style="left:590px;top:-1px;width:29px;height:22px;border-color:#555"><div class="minbar"></div></div><div class="tb" style="left:618px;top:-1px;width:27px;height:22px;border-color:#555"><div class="maxbox"></div></div><div class="tb" style="left:644px;top:-1px;width:47px;height:22px;border-color:#555;background:#c5d6de"><svg style="position:absolute;left:18px;top:5px" width="9" height="9" viewBox="0 0 9 9"><path d="M1 1 L8 8 M8 1 L1 8" stroke="#000" stroke-width="2.4" stroke-linecap="square"/></svg></div><div class="client" style="left:7px;top:29px;width:682px;height:665px;"><div class="cedge" style="border-color:#a3b3bb"></div><div class="sunk" style="left:25px;top:13px;width:193px;height:42px;"><div class="red">1152期--0389547612</div></div><div class="tbx" style="left:224px;top:17px;width:140px;height:33px;"></div><div class="lv" style="left:14px;top:62px;width:202px;height:416px"><div class="lvh" style="width:183px"></div><div class="hd" style="left:7px">开奖期号</div><div class="hdiv" style="left:100px"></div><div class="hd" style="left:107px">开奖号码</div><div class="rw" style="left:7px;top:20px">1130</div><div class="rw" style="left:107px;top:20px">0389547612</div><div class="rw" style="left:7px;top:40px">1131</div><div class="rw" style="left:107px;top:40px">0389547612</div><div class="rw" style="left:7px;top:60px">1132</div><div class="rw" style="left:107px;top:60px">0389547612</div><div class="rw" style="left:7px;top:80px">1133</div><div class="rw" style="left:107px;top:80px">0389547612</div><div class="rw" style="left:7px;top:100px">1134</div><div class="rw" style="left:107px;top:100px">0389547612</div><div class="rw" style="left:7px;top:120px">1135</div><div class="rw" style="left:107px;top:120px">0389547612</div><div class="rw" style="left:7px;top:140px">1136</div><div class="rw" style="left:107px;top:140px">0389547612</div><div class="rw" style="left:7px;top:160px">1137</div><div class="rw" style="left:107px;top:160px">0389547612</div><div class="rw" style="left:7px;top:180px">1138</div><div class="rw" style="left:107px;top:180px">0389547612</div><div class="rw" style="left:7px;top:200px">1139</div><div class="rw" style="left:107px;top:200px">0389547612</div><div class="rw" style="left:7px;top:220px">1140</div><div class="rw" style="left:107px;top:220px">0389547612</div><div class="rw" style="left:7px;top:240px">1141</div><div class="rw" style="left:107px;top:240px">0389547612</div><div class="rw" style="left:7px;top:260px">1142</div><div class="rw" style="left:107px;top:260px">0389547612</div><div class="rw" style="left:7px;top:280px">1143</div><div class="rw" style="left:107px;top:280px">0389547612</div><div class="rw" style="left:7px;top:300px">1144</div><div class="rw" style="left:107px;top:300px">0389547612</div><div class="rw" style="left:7px;top:320px">1145</div><div class="rw" style="left:107px;top:320px">0389547612</div><div class="rw" style="left:7px;top:340px">1146</div><div class="rw" style="left:107px;top:340px">0389547612</div><div class="rw" style="left:7px;top:360px">1147</div><div class="rw" style="left:107px;top:360px">0389547612</div><div class="rw" style="left:7px;top:380px">1148</div><div class="rw" style="left:107px;top:380px">0389547612</div><div class="vsb" style="left:183px;top:0;width:17px;height:397px"><div class="sbtn" style="left:0;top:0;width:16px;height:17px"><svg style="position:absolute;left:4px;top:6px" width="8" height="5" viewBox="0 0 8 5"><path d="M0.5 4.5 L4 1 L7.5 4.5" stroke="#606060" stroke-width="1.1" fill="none"/></svg></div><div class="thumb" style="left:0;top:17px;width:16px;height:260px"><svg class="grip" width="7" height="7" viewBox="0 0 7 7"><path d="M0 1.5H7M0 3.5H7M0 5.5H7" stroke="#606060" stroke-width="1"/></svg></div><div class="sbtn" style="left:0;top:380px;width:16px;height:17px;border-top:1px solid #c8c8c8"><svg style="position:absolute;left:4px;top:6px" width="8" height="5" viewBox="0 0 8 5"><path d="M0.5 0.5 L4 4 L7.5 0.5" stroke="#606060" stroke-width="1.1" fill="none"/></svg></div></div><div class="hsb" style="left:0;top:397px;width:183px;height:17px"><div class="sbtn" style="left:0;top:0;width:17px;height:16px"><svg style="position:absolute;left:6px;top:4px" width="5" height="8" viewBox="0 0 5 8"><path d="M4.5 0.5 L1 4 L4.5 7.5" stroke="#606060" stroke-width="1.1" fill="none"/></svg></div><div class="thumb" style="left:17px;top:0;width:68px;height:16px"><svg class="hgrip" width="7" height="8" viewBox="0 0 7 8"><path d="M1 0V8M3.5 0V8M6 0V8" stroke="#606060" stroke-width="1.4"/></svg></div><div class="sbtn" style="left:166px;top:0;width:17px;height:16px;border-left:1px solid #c8c8c8"><svg style="position:absolute;left:5px;top:4px" width="5" height="8" viewBox="0 0 5 8"><path d="M0.5 0.5 L4 4 L0.5 7.5" stroke="#606060" stroke-width="1.1" fill="none"/></svg></div></div><div class="corner" style="left:183px;top:397px;width:17px;height:17px"></div></div><div class="t st" style="left:223px;top:63px;">1432期里共中14次</div><div class="t st" style="left:223px;top:78px;">命中率0.98%</div><div class="t st" style="left:223px;top:93px;">最大连挂7次</div><div class="t st" style="left:223px;top:108px;">最大连中3次</div><div class="t st" style="left:223px;top:123px;">当前连挂0次</div><div class="t st" style="left:223px;top:138px;">当前连中2次</div><div class="lv" style="left:371px;top:14px;width:302px;height:463px"><div class="lvh" style="width:283px"></div><div class="hd" style="left:6px">开<span class=dots>...</span></div><div class="hdiv" style="left:60px"></div><div class="hd" style="left:66px">开奖号码</div><div class="hdiv" style="left:140px"></div><div class="hd" style="left:146px">公式</div><div class="hdiv" style="left:280px"></div><div class="rw" style="left:7px;top:20px">123</div><div class="rw" style="left:67px;top:20px">01234...</div><div class="rw" style="left:7px;top:40px">0975</div><div class="rw" style="left:67px;top:40px">94132...</div><div class="rw" style="left:7px;top:60px">0976</div><div class="rw" style="left:67px;top:60px">27039...</div><div class="rw" style="left:7px;top:80px">0977</div><div class="rw" style="left:67px;top:80px">86927...</div><div class="rw" style="left:7px;top:100px">0978</div><div class="rw" style="left:67px;top:100px">64289...</div><div class="rw" style="left:7px;top:120px">0979</div><div class="rw" style="left:67px;top:120px">35279...</div><div class="rw" style="left:7px;top:140px">0980</div><div class="rw" style="left:67px;top:140px">63280...</div><div class="rw" style="left:7px;top:160px">0981</div><div class="rw" style="left:67px;top:160px">53926...</div><div class="rw" style="left:7px;top:180px">0982</div><div class="rw" style="left:67px;top:180px">42860...</div><div class="rw" style="left:7px;top:200px">0983</div><div class="rw" style="left:67px;top:200px">09357...</div><div class="rw" style="left:7px;top:220px">0984</div><div class="rw" style="left:67px;top:220px">31270...</div><div class="rw" style="left:7px;top:240px">0985</div><div class="rw" style="left:67px;top:240px">46892...</div><div class="rw" style="left:7px;top:260px">0986</div><div class="rw" style="left:67px;top:260px">14506...</div><div class="rw" style="left:7px;top:280px">0987</div><div class="rw" style="left:67px;top:280px">19362...</div><div class="rw" style="left:7px;top:300px">0988</div><div class="rw" style="left:67px;top:300px">48026...</div><div class="rw" style="left:7px;top:320px">0989</div><div class="rw" style="left:67px;top:320px">57092...</div><div class="rw" style="left:7px;top:340px">0990</div><div class="rw" style="left:67px;top:340px">59013...</div><div class="rw" style="left:7px;top:360px">0991</div><div class="rw" style="left:67px;top:360px">75312...</div><div class="rw" style="left:7px;top:380px">0992</div><div class="rw" style="left:67px;top:380px">25910...</div><div class="rw" style="left:7px;top:400px">0993</div><div class="rw" style="left:67px;top:400px">15847...</div><div class="rw" style="left:7px;top:420px">0994</div><div class="rw" style="left:67px;top:420px">34506...</div><div class="vsb" style="left:283px;top:0;width:17px;height:444px"><div class="sbtn" style="left:0;top:0;width:16px;height:17px"><svg style="position:absolute;left:4px;top:6px" width="8" height="5" viewBox="0 0 8 5"><path d="M0.5 4.5 L4 1 L7.5 4.5" stroke="#606060" stroke-width="1.1" fill="none"/></svg></div><div class="thumb" style="left:0;top:17px;width:16px;height:16px"></div><div class="sbtn" style="left:0;top:427px;width:16px;height:17px;border-top:1px solid #c8c8c8"><svg style="position:absolute;left:4px;top:6px" width="8" height="5" viewBox="0 0 8 5"><path d="M0.5 0.5 L4 4 L7.5 0.5" stroke="#606060" stroke-width="1.1" fill="none"/></svg></div></div><div class="hsb" style="left:0;top:444px;width:283px;height:17px"><div class="sbtn" style="left:0;top:0;width:17px;height:16px"><svg style="position:absolute;left:6px;top:4px" width="5" height="8" viewBox="0 0 5 8"><path d="M4.5 0.5 L1 4 L4.5 7.5" stroke="#606060" stroke-width="1.1" fill="none"/></svg></div><div class="thumb" style="left:17px;top:0;width:207px;height:16px"><svg class="hgrip" width="7" height="8" viewBox="0 0 7 8"><path d="M1 0V8M3.5 0V8M6 0V8" stroke="#606060" stroke-width="1.4"/></svg></div><div class="sbtn" style="left:266px;top:0;width:17px;height:16px;border-left:1px solid #c8c8c8"><svg style="position:absolute;left:5px;top:4px" width="5" height="8" viewBox="0 0 5 8"><path d="M0.5 0.5 L4 4 L0.5 7.5" stroke="#606060" stroke-width="1.1" fill="none"/></svg></div></div><div class="corner" style="left:283px;top:444px;width:17px;height:17px"></div></div><div class="t lb" style="left:242px;top:283px;">账号</div><div class="tbx" style="left:284px;top:272px;width:74px;height:37px;"></div><div class="t lb" style="left:244px;top:324px;">密码</div><div class="tbx" style="left:286px;top:316px;width:74px;height:37px;"></div><div class="t lb" style="left:237px;top:368px;">验证码</div><div class="tbx" style="left:284px;top:361px;width:74px;height:37px;"></div><div class="t lb" style="left:242px;top:404px;">余额</div><div class="sunkw" style="left:285px;top:402px;width:76px;height:27px;"><div class="t sm" style="left:1px;top:5px;letter-spacing:-0.4px">391.018</div></div><div class="btn" style="left:235px;top:435px;width:130px;height:44px;"><div class="bt" style="padding:1px 0 0 0">已登录</div></div><div class="t lb" style="left:5px;top:493px;">倍投</div><div class="tbx" style="left:42px;top:484px;width:238px;height:38px;"><div class="t sm" style="left:6px;top:4px;letter-spacing:-0.5px">11,22,44,89,180,363,733,1479</div></div><div class="t lb" style="left:299px;top:490px;">彩种</div><div class="tbx" style="left:337px;top:487px;width:61px;height:23px;"><div class="sel">波场</div><svg style="position:absolute;left:48px;top:8px" width="8" height="6" viewBox="0 0 8 6"><path d="M0.8 0.8 L4 4.5 L7.2 0.8" stroke="#3a3a3a" stroke-width="1.8" fill="none"/></svg></div><div class="btn" style="left:400px;top:485px;width:59px;height:30px;"><div class="bt">确认设置</div></div><div class="cbbg" style="left:469px;top:482px;width:111px;height:27px"><div class="cb" style="left:0px;top:7px"><svg width="11" height="11" viewBox="0 0 11 11" style="position:absolute;left:0;top:0"><path d="M1.2 5 L4 7.8 L9.6 1.8" stroke="#222" stroke-width="2.3" fill="none"/></svg></div><div class="t cbl" style="left:17px;top:4px;font-size:14px">勾选运行程序</div></div><div class="cbbg" style="left:589px;top:485px;width:83px;height:24px"><div class="cb" style="left:0px;top:5px"><svg width="11" height="11" viewBox="0 0 11 11" style="position:absolute;left:0;top:0"><path d="M1.2 5 L4 7.8 L9.6 1.8" stroke="#222" stroke-width="2.3" fill="none"/></svg></div><div class="t cbl" style="left:17px;top:3px;font-size:14px">真实投注</div></div><div class="t lb" style="left:22px;top:532px;">奖金赔率</div><div class="tbx" style="left:88px;top:527px;width:70px;height:28px;"><div class="t sm" style="left:5px;top:3px">985</div></div><div class="t lb" style="left:171px;top:528px;">盈亏值</div><div class="tbx" style="left:227px;top:528px;width:62px;height:23px;"><div class="t sm" style="left:0;width:60px;text-align:center;top:4px">6.237</div></div><div class="t lb" style="left:312px;top:528px;">盈亏大于N元停止真实投注</div><div class="tbx" style="left:477px;top:528px;width:66px;height:23px;"><div class="t sm" style="left:5px;top:4px">-1000</div></div><div class="tbx" style="left:552px;top:528px;width:103px;height:26px;"></div><div class="tbx" style="left:9px;top:563px;width:361px;height:34px;"></div><div class="sunky" style="left:372px;top:560px;width:136px;height:37px;"></div><div class="tbx" style="left:515px;top:559px;width:126px;height:33px;"><div class="t sm" style="left:3px;top:3px">s.cygj11.online</div></div><div class="tbx" style="left:16px;top:608px;width:131px;height:39px;"></div><div class="tbx" style="left:159px;top:610px;width:107px;height:34px;"></div><div class="cbbg" style="left:357px;top:610px;width:113px;height:26px"><div class="cb" style="left:0px;top:6px"></div><div class="t cbl" style="left:16px;top:3px;font-size:13px">前五</div></div><div class="btn" style="left:533px;top:606px;width:127px;height:33px;"><div class="bt">清除记录</div></div></div></div>
<div class="win" style="left:-8px;top:133px;width:698px;height:702px;background:#66c9e9;border-color:#3a3a3a"><svg style="position:absolute;left:11px;top:6px" width="13" height="16"><use href="#mario16"/></svg><div class="title" style="left:47px;top:0;width:600px">长运PK自动出号模拟投注计划</div><div class="tb" style="left:590px;top:-1px;width:29px;height:22px;border-color:#333"><div class="minbar"></div></div><div class="tb" style="left:618px;top:-1px;width:27px;height:22px;border-color:#333"><div class="maxbox"></div></div><div class="tb" style="left:644px;top:-1px;width:47px;height:22px;border-color:#333;background:#c7564e"><svg style="position:absolute;left:18px;top:5px" width="9" height="9" viewBox="0 0 9 9"><path d="M1 1 L8 8 M8 1 L1 8" stroke="#000" stroke-width="2.4" stroke-linecap="square"/></svg></div><div class="client" style="left:7px;top:29px;width:682px;height:665px;"><div class="cedge" style="border-color:#78a9c4"></div><div class="sunk" style="left:25px;top:13px;width:193px;height:42px;"><div class="red">2305期--5379214860</div></div><div class="tbx" style="left:224px;top:17px;width:140px;height:33px;"></div><div class="lv" style="left:14px;top:62px;width:202px;height:416px"><div class="lvh" style="width:183px"></div><div class="hd" style="left:7px">开奖期号</div><div class="hdiv" style="left:100px"></div><div class="hd" style="left:107px">开奖号码</div><div class="rw" style="left:7px;top:20px">2281</div><div class="rw" style="left:107px;top:20px">7408931256</div><div class="rw" style="left:7px;top:40px">2282</div><div class="rw" style="left:107px;top:40px">5432610978</div><div class="rw" style="left:7px;top:60px">2283</div><div class="rw" style="left:107px;top:60px">0469237581</div><div class="rw" style="left:7px;top:80px">2284</div><div class="rw" style="left:107px;top:80px">5407921368</div><div class="rw" style="left:7px;top:100px">2285</div><div class="rw" style="left:107px;top:100px">9302615748</div><div class="rw" style="left:7px;top:120px">2286</div><div class="rw" style="left:107px;top:120px">8475962130</div><div class="rw" style="left:7px;top:140px">2287</div><div class="rw" style="left:107px;top:140px">1406985372</div><div class="rw" style="left:7px;top:160px">2288</div><div class="rw" style="left:107px;top:160px">0375216984</div><div class="rw" style="left:7px;top:180px">2289</div><div class="rw" style="left:107px;top:180px">2986134057</div><div class="rw" style="left:7px;top:200px">2290</div><div class="rw" style="left:107px;top:200px">0132547869</div><div class="rw" style="left:7px;top:220px">2291</div><div class="rw" style="left:107px;top:220px">7156840239</div><div class="rw" style="left:7px;top:240px">2292</div><div class="rw" style="left:107px;top:240px">9341280756</div><div class="rw" style="left:7px;top:260px">2293</div><div class="rw" style="left:107px;top:260px">9612387054</div><div class="rw" style="left:7px;top:280px">2294</div><div class="rw" style="left:107px;top:280px">1054738962</div><div class="rw" style="left:7px;top:300px">2295</div><div class="rw" style="left:107px;top:300px">0695371824</div><div class="rw" style="left:7px;top:320px">2296</div><div class="rw" style="left:107px;top:320px">9148705632</div><div class="rw" style="left:7px;top:340px">2297</div><div class="rw" style="left:107px;top:340px">6341587920</div><div class="rw" style="left:7px;top:360px">2298</div><div class="rw" style="left:107px;top:360px">8734019256</div><div class="rw" style="left:7px;top:380px">2299</div><div class="rw" style="left:107px;top:380px">4623809715</div><div class="vsb" style="left:183px;top:0;width:17px;height:397px"><div class="sbtn" style="left:0;top:0;width:16px;height:17px"><svg style="position:absolute;left:4px;top:6px" width="8" height="5" viewBox="0 0 8 5"><path d="M0.5 4.5 L4 1 L7.5 4.5" stroke="#606060" stroke-width="1.1" fill="none"/></svg></div><div class="thumb" style="left:0;top:17px;width:16px;height:260px"><svg class="grip" width="7" height="7" viewBox="0 0 7 7"><path d="M0 1.5H7M0 3.5H7M0 5.5H7" stroke="#606060" stroke-width="1"/></svg></div><div class="sbtn" style="left:0;top:380px;width:16px;height:17px;border-top:1px solid #c8c8c8"><svg style="position:absolute;left:4px;top:6px" width="8" height="5" viewBox="0 0 8 5"><path d="M0.5 0.5 L4 4 L7.5 0.5" stroke="#606060" stroke-width="1.1" fill="none"/></svg></div></div><div class="hsb" style="left:0;top:397px;width:183px;height:17px"><div class="sbtn" style="left:0;top:0;width:17px;height:16px"><svg style="position:absolute;left:6px;top:4px" width="5" height="8" viewBox="0 0 5 8"><path d="M4.5 0.5 L1 4 L4.5 7.5" stroke="#606060" stroke-width="1.1" fill="none"/></svg></div><div class="thumb" style="left:17px;top:0;width:68px;height:16px"><svg class="hgrip" width="7" height="8" viewBox="0 0 7 8"><path d="M1 0V8M3.5 0V8M6 0V8" stroke="#606060" stroke-width="1.4"/></svg></div><div class="sbtn" style="left:166px;top:0;width:17px;height:16px;border-left:1px solid #c8c8c8"><svg style="position:absolute;left:5px;top:4px" width="5" height="8" viewBox="0 0 5 8"><path d="M0.5 0.5 L4 4 L0.5 7.5" stroke="#606060" stroke-width="1.1" fill="none"/></svg></div></div><div class="corner" style="left:183px;top:397px;width:17px;height:17px"></div></div><div class="t st" style="left:223px;top:63px;">2815期里共中28次</div><div class="t st" style="left:223px;top:78px;">命中率0.99%</div><div class="t st" style="left:223px;top:93px;">最大连挂7次</div><div class="t st" style="left:223px;top:108px;">最大连中3次</div><div class="t st" style="left:223px;top:123px;">当前连挂0次</div><div class="t st" style="left:223px;top:138px;">当前连中2次</div><div class="lv" style="left:371px;top:14px;width:302px;height:463px"><div class="lvh" style="width:283px"></div><div class="hd" style="left:6px">开<span class=dots>...</span></div><div class="hdiv" style="left:60px"></div><div class="hd" style="left:66px">开奖号码</div><div class="hdiv" style="left:140px"></div><div class="hd" style="left:146px">公式</div><div class="hdiv" style="left:280px"></div><div class="rw" style="left:7px;top:20px">1949</div><div class="rw" style="left:67px;top:20px">80624...</div><div class="rw" style="left:7px;top:40px">1950</div><div class="rw" style="left:67px;top:40px">94132...</div><div class="rw" style="left:7px;top:60px">1951</div><div class="rw" style="left:67px;top:60px">49083...</div><div class="rw" style="left:7px;top:80px">1952</div><div class="rw" style="left:67px;top:80px">27039...</div><div class="rw" style="left:7px;top:100px">1953</div><div class="rw" style="left:67px;top:100px">60215...</div><div class="rw" style="left:7px;top:120px">1954</div><div class="rw" style="left:67px;top:120px">86927...</div><div class="rw" style="left:7px;top:140px">1955</div><div class="rw" style="left:67px;top:140px">38026...</div><div class="rw" style="left:7px;top:160px">1956</div><div class="rw" style="left:67px;top:160px">64289...</div><div class="rw" style="left:7px;top:180px">1957</div><div class="rw" style="left:67px;top:180px">09641...</div><div class="rw" style="left:7px;top:200px">1958</div><div class="rw" style="left:67px;top:200px">35279...</div><div class="rw" style="left:7px;top:220px">1959</div><div class="rw" style="left:67px;top:220px">37195...</div><div class="rw" style="left:7px;top:240px">1960</div><div class="rw" style="left:67px;top:240px">63280...</div><div class="rw" style="left:7px;top:260px">1961</div><div class="rw" style="left:67px;top:260px">87410...</div><div class="rw" style="left:7px;top:280px">1962</div><div class="rw" style="left:67px;top:280px">53926...</div><div class="rw" style="left:7px;top:300px">1963</div><div class="rw" style="left:67px;top:300px">30579...</div><div class="rw" style="left:7px;top:320px">1964</div><div class="rw" style="left:67px;top:320px">42860...</div><div class="rw" style="left:7px;top:340px">1965</div><div class="rw" style="left:67px;top:340px">48607...</div><div class="rw" style="left:7px;top:360px">1966</div><div class="rw" style="left:67px;top:360px">09357...</div><div class="rw" style="left:7px;top:380px">1967</div><div class="rw" style="left:67px;top:380px">83279...</div><div class="rw" style="left:7px;top:400px">1968</div><div class="rw" style="left:67px;top:400px">31270...</div><div class="rw" style="left:7px;top:420px">1969</div><div class="rw" style="left:67px;top:420px">36594...</div><div class="vsb" style="left:283px;top:0;width:17px;height:444px"><div class="sbtn" style="left:0;top:0;width:16px;height:17px"><svg style="position:absolute;left:4px;top:6px" width="8" height="5" viewBox="0 0 8 5"><path d="M0.5 4.5 L4 1 L7.5 4.5" stroke="#606060" stroke-width="1.1" fill="none"/></svg></div><div class="thumb" style="left:0;top:17px;width:16px;height:16px"></div><div class="sbtn" style="left:0;top:427px;width:16px;height:17px;border-top:1px solid #c8c8c8"><svg style="position:absolute;left:4px;top:6px" width="8" height="5" viewBox="0 0 8 5"><path d="M0.5 0.5 L4 4 L7.5 0.5" stroke="#606060" stroke-width="1.1" fill="none"/></svg></div></div><div class="hsb" style="left:0;top:444px;width:283px;height:17px"><div class="sbtn" style="left:0;top:0;width:17px;height:16px"><svg style="position:absolute;left:6px;top:4px" width="5" height="8" viewBox="0 0 5 8"><path d="M4.5 0.5 L1 4 L4.5 7.5" stroke="#606060" stroke-width="1.1" fill="none"/></svg></div><div class="thumb" style="left:17px;top:0;width:207px;height:16px"><svg class="hgrip" width="7" height="8" viewBox="0 0 7 8"><path d="M1 0V8M3.5 0V8M6 0V8" stroke="#606060" stroke-width="1.4"/></svg></div><div class="sbtn" style="left:266px;top:0;width:17px;height:16px;border-left:1px solid #c8c8c8"><svg style="position:absolute;left:5px;top:4px" width="5" height="8" viewBox="0 0 5 8"><path d="M0.5 0.5 L4 4 L0.5 7.5" stroke="#606060" stroke-width="1.1" fill="none"/></svg></div></div><div class="corner" style="left:283px;top:444px;width:17px;height:17px"></div></div><div class="t lb" style="left:242px;top:283px;">账号</div><div class="tbx" style="left:284px;top:272px;width:74px;height:37px;"></div><div class="t lb" style="left:244px;top:324px;">密码</div><div class="tbx" style="left:286px;top:316px;width:74px;height:37px;"></div><div class="t lb" style="left:237px;top:368px;">验证码</div><div class="tbx" style="left:284px;top:361px;width:74px;height:37px;"></div><div class="t lb" style="left:242px;top:404px;">余额</div><div class="sunkw" style="left:285px;top:402px;width:76px;height:27px;"><div class="t sm" style="left:1px;top:5px;letter-spacing:-0.4px">391.018</div></div><div class="btn" style="left:235px;top:435px;width:130px;height:44px;"><div class="bt" style="padding:1px 0 0 0">已登录</div></div><div class="t lb" style="left:5px;top:493px;">倍投</div><div class="tbx" style="left:42px;top:484px;width:238px;height:38px;"><div class="t sm" style="left:6px;top:4px;letter-spacing:-0.5px">11,22,44,89,180,363,733,1479</div></div><div class="t lb" style="left:299px;top:490px;">彩种</div><div class="tbx" style="left:337px;top:487px;width:61px;height:23px;"><div class="sel">波场</div><svg style="position:absolute;left:48px;top:8px" width="8" height="6" viewBox="0 0 8 6"><path d="M0.8 0.8 L4 4.5 L7.2 0.8" stroke="#3a3a3a" stroke-width="1.8" fill="none"/></svg></div><div class="btn" style="left:400px;top:485px;width:59px;height:30px;"><div class="bt">确认设置</div></div><div class="cbbg" style="left:469px;top:482px;width:111px;height:27px"><div class="cb" style="left:0px;top:7px"><svg width="11" height="11" viewBox="0 0 11 11" style="position:absolute;left:0;top:0"><path d="M1.2 5 L4 7.8 L9.6 1.8" stroke="#222" stroke-width="2.3" fill="none"/></svg></div><div class="t cbl" style="left:17px;top:4px;font-size:14px">勾选运行程序</div></div><div class="cbbg" style="left:589px;top:485px;width:83px;height:24px"><div class="cb" style="left:0px;top:5px"><svg width="11" height="11" viewBox="0 0 11 11" style="position:absolute;left:0;top:0"><path d="M1.2 5 L4 7.8 L9.6 1.8" stroke="#222" stroke-width="2.3" fill="none"/></svg></div><div class="t cbl" style="left:17px;top:3px;font-size:14px">真实投注</div></div><div class="t lb" style="left:22px;top:532px;">奖金赔率</div><div class="tbx" style="left:88px;top:527px;width:70px;height:28px;"><div class="t sm" style="left:5px;top:3px">985</div></div><div class="t lb" style="left:171px;top:528px;">盈亏值</div><div class="tbx" style="left:227px;top:528px;width:62px;height:23px;"><div class="t sm" style="left:0;width:60px;text-align:center;top:4px">6.237</div></div><div class="t lb" style="left:312px;top:528px;">盈亏大于N元停止真实投注</div><div class="tbx" style="left:477px;top:528px;width:66px;height:23px;"><div class="t sm" style="left:5px;top:4px">-1000</div></div><div class="tbx" style="left:552px;top:528px;width:103px;height:26px;"></div><div class="tbx" style="left:9px;top:563px;width:361px;height:34px;"></div><div class="sunky" style="left:372px;top:560px;width:136px;height:37px;"></div><div class="tbx" style="left:515px;top:559px;width:126px;height:33px;"><div class="t sm" style="left:3px;top:3px">s.cygj11.online</div></div><div class="tbx" style="left:16px;top:608px;width:131px;height:39px;"></div><div class="tbx" style="left:159px;top:610px;width:107px;height:34px;"></div><div class="cbbg" style="left:357px;top:610px;width:113px;height:26px"><div class="cb" style="left:0px;top:6px"></div><div class="t cbl" style="left:16px;top:3px;font-size:13px">前五</div></div><div class="btn" style="left:533px;top:606px;width:127px;height:33px;"><div class="bt">清除记录</div></div></div></div>
<div style="position:absolute;left:0;top:0;width:3px;height:76px;background:#ececec"></div>
<div style="position:absolute;left:0;top:76px;width:3px;height:39px;background:linear-gradient(#8cbc2c,#5a8612)"></div>
<div style="position:absolute;left:0;top:115px;width:3px;height:25px;background:#2d2d2d"></div>
<div style="position:absolute;left:0;top:140px;width:3px;height:3px;background:#8aa860"></div>
<div style="position:absolute;left:0;top:143px;width:3px;height:695px;background:#efefef"></div>
<div style="position:absolute;left:3px;top:133px;width:1px;height:701px;background:#6f6f6f"></div>
</body></html>
